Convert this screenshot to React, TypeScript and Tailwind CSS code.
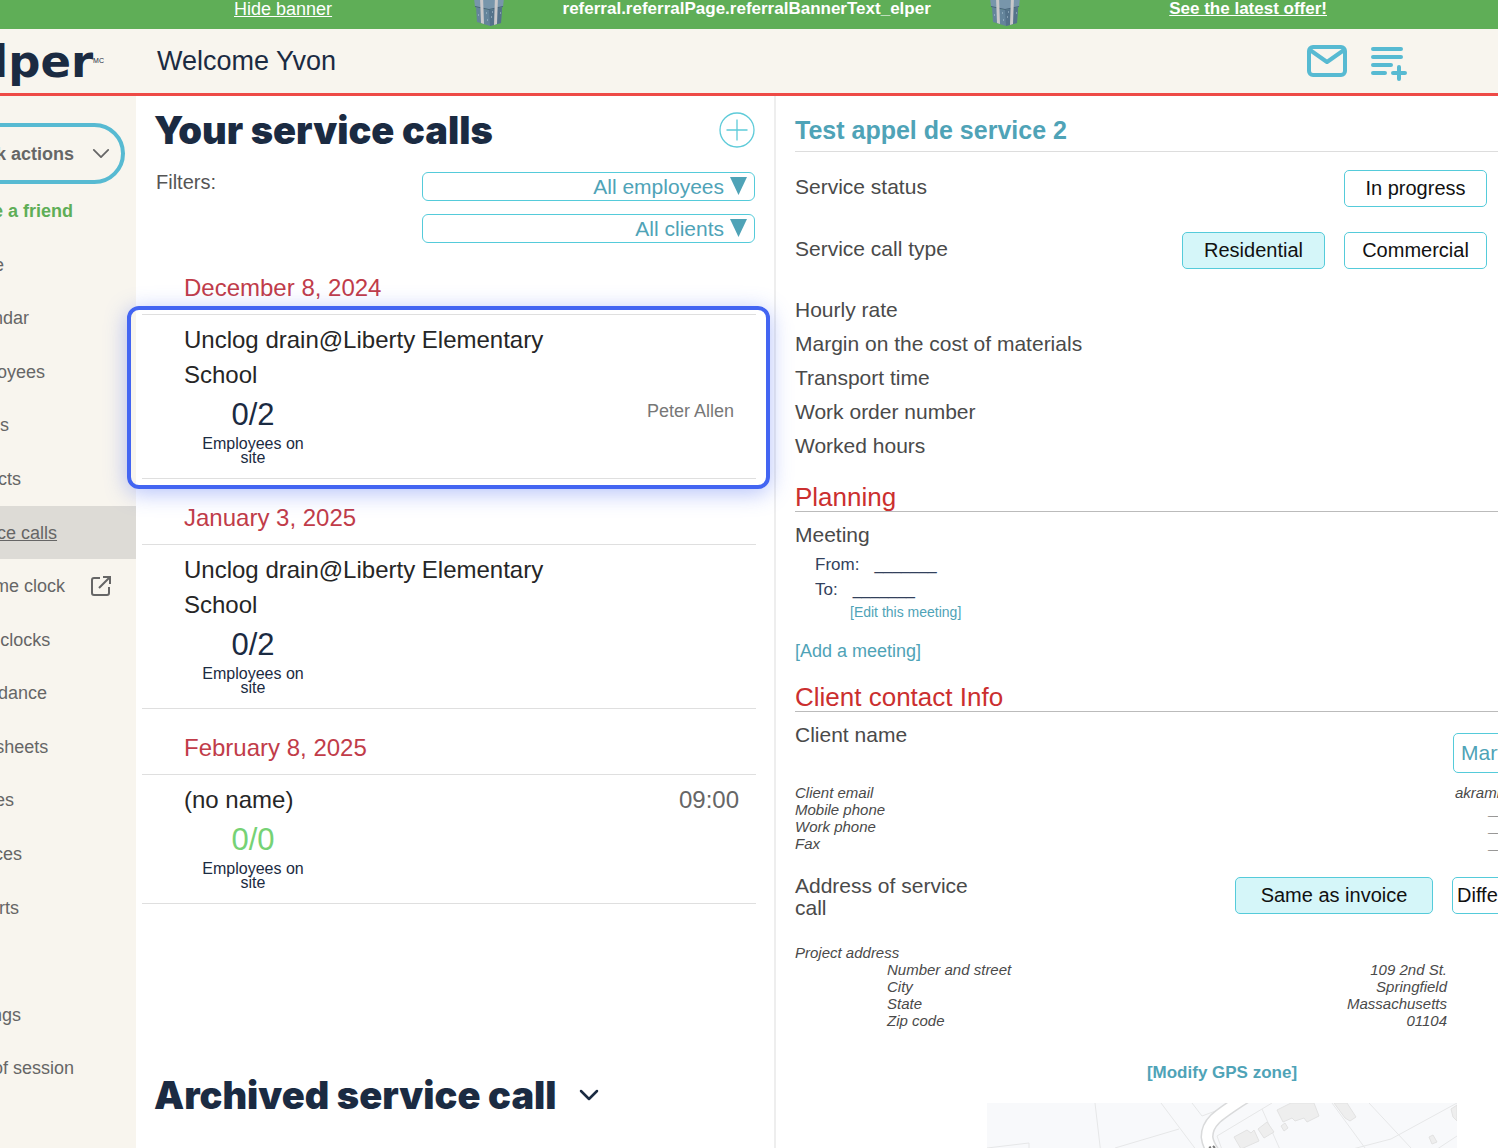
import { ReactNode } from "react";
import cn from "clsx";

type ServiceCall = {
  date: string;
  name: string;
  time?: string;
  onSite: string;
  complete?: boolean;
  employee?: string;
  selected?: boolean;
};

const serviceCalls: ServiceCall[] = [
  {
    date: "December 8, 2024",
    name: "Unclog drain@Liberty Elementary School",
    onSite: "0/2",
    employee: "Peter Allen",
    selected: true,
  },
  {
    date: "January 3, 2025",
    name: "Unclog drain@Liberty Elementary School",
    onSite: "0/2",
  },
  {
    date: "February 8, 2025",
    name: "(no name)",
    time: "09:00",
    onSite: "0/0",
    complete: true,
  },
];

const menu = [
  "Home",
  "Calendar",
  "Employees",
  "Teams",
  "Projects",
  "Service calls",
  "My time clock",
  "Time clocks",
  "Attendance",
  "Timesheets",
  "Quotes",
  "Invoices",
  "Reports",
  "Tools",
  "Settings",
  "End of session",
];

const details = [
  "Hourly rate",
  "Margin on the cost of materials",
  "Transport time",
  "Work order number",
  "Worked hours",
];

const address = [
  ["Number and street", "109 2nd St."],
  ["City", "Springfield"],
  ["State", "Massachusetts"],
  ["Zip code", "01104"],
];

function Gift() {
  return (
    <svg viewBox="0 0 32 34" className="mb-[2px] h-[34px] w-8 shrink-0" aria-hidden="true">
      <path d="M3 14 16 17 29 14 28 30 17 33 4 29Z" fill="#64849b" />
      <path d="M16 17 29 14 28 30 17 33Z" fill="#54728a" />
      <path d="M1 5 16 1 31 5 30 14 16 17 2 14Z" fill="#7896ab" />
      <path d="M2 13 16 16 30 13V14L16 17 2 14Z" fill="#47637a" />
      <path d="M7 4 10 3 11 31 8 30ZM22 3 25 4 24 31 21 32Z" fill="#c9c8ca" />
      <path d="M13 20h1M18 24h1M14 27h1M19 19h1M5 22h1M27 20h1" stroke="#b3cad9" />
    </svg>
  );
}

function Chevron(props: { className: string }) {
  return (
    <svg viewBox="0 0 20 12" className={props.className} fill="none" stroke="currentColor" strokeLinecap="round" strokeLinejoin="round" aria-hidden="true">
      <path d="M2 2 10 10 18 2" />
    </svg>
  );
}

function Banner() {
  return (
    <div className="flex h-[29px] shrink-0 items-end justify-between overflow-hidden bg-[#5fae57] pr-[171px] pl-[234px] text-lg leading-[22px] text-white">
      <a href="#hide" className="pb-[9px] underline">
        Hide banner
      </a>
      <div className="mr-2 flex items-end gap-[58px]">
        <Gift />
        <p className="pb-[9px] text-[17px] font-bold">
          referral.referralPage.referralBannerText_elper
        </p>
        <Gift />
      </div>
      <a href="#offer" className="pb-[9px] text-[17px] font-bold underline">
        See the latest offer!
      </a>
    </div>
  );
}

function Header() {
  return (
    <header className="flex h-[67px] shrink-0 items-center border-b-[3px] border-[#ee4a46] bg-[#f8f5ee] text-[#1b2b42]">
      <a href="#home" className="flex w-[157px] shrink-0 justify-end pt-[2px] pr-[53px]">
        <span className="font-['DejaVu_Sans'] text-[45px] leading-[52px] font-bold">elper</span>
        <span className="pt-5 text-[7px]">MC</span>
      </a>
      <h2 className="flex-1 text-[27px]">Welcome Yvon</h2>
      <div className="flex items-center gap-6 pr-[91px] text-[#57bad2]">
        <button aria-label="Messages">
          <svg viewBox="0 0 40 32" className="h-8 w-10" fill="none" stroke="currentColor" strokeWidth="4" strokeLinejoin="round">
            <rect x="2" y="2" width="36" height="28" rx="4" />
            <path d="M3 5 20 17 37 5" />
          </svg>
        </button>
        <button aria-label="Add note">
          <svg viewBox="0 0 36 36" className="mt-1 h-9 w-9" fill="none" stroke="currentColor" strokeWidth="4" strokeLinecap="round">
            <path d="M2 4H30M2 12H30M2 20H20M2 28H14M22 28H34M28 22V34" />
          </svg>
        </button>
      </div>
    </header>
  );
}

function Sidebar() {
  return (
    <nav className="flex w-[136px] shrink-0 flex-col overflow-hidden bg-[#f8f5ee] pt-[27px] pb-[53px] text-lg text-[#666]">
      <button className="mr-[11px] -ml-[72px] flex h-[61px] shrink-0 items-center justify-end gap-[18px] rounded-full border-4 border-[#57bad2] pr-[11px] font-bold whitespace-nowrap">
        Quick actions
        <Chevron className="h-[11px] w-[18px] stroke-2" />
      </button>
      <a href="#invite" className="-ml-[44px] flex h-[54px] shrink-0 items-center font-bold whitespace-nowrap text-[#5fae57]">
        Invite a friend
      </a>
      <ul className="flex flex-1 flex-col">
        {menu.map((label) => (
          <li
            key={label}
            className={cn("flex flex-1 items-center whitespace-nowrap", {
              "bg-[#dddbd6] underline": label === "Service calls",
            })}
          >
            <a href="#menu" className="-ml-[44px] flex items-center gap-[25px]">
              {label}
              {label === "My time clock" && (
                <svg viewBox="0 0 22 22" className="h-[22px] w-[22px]" fill="none" stroke="currentColor" strokeWidth="2">
                  <path d="M10 3H4a2 2 0 0 0-2 2V18a2 2 0 0 0 2 2H17a2 2 0 0 0 2-2V12M13 2H20V9M20 2 9 13" />
                </svg>
              )}
            </a>
          </li>
        ))}
      </ul>
    </nav>
  );
}

function Filter(props: { label: string; value: string }) {
  return (
    <div className="relative">
      <select
        aria-label={props.label}
        className="block h-[29px] w-full appearance-none rounded-md border border-[#55cbda] bg-white pr-[30px] text-right text-[21px] leading-[27px] text-[#4fa3b7] [text-align-last:right]"
      >
        <option>{props.value}</option>
      </select>
      <svg viewBox="0 0 17 18" className="pointer-events-none absolute top-[5px] right-2 h-[18px] w-[17px]" fill="#4fa3b7" aria-hidden="true">
        <path d="M0 0H17L8.5 18Z" />
      </svg>
    </div>
  );
}

function Call(props: { call: ServiceCall }) {
  const { call } = props;
  return (
    <section>
      <h3 className="flex h-[65px] items-end pb-[9px] pl-[42px] text-2xl leading-[35px] text-[#c13c49]">
        {call.date}
      </h3>
      <article className="relative border-y border-[#dfdfdf] pt-[7px] pr-[22px] pb-[13px] pl-[42px]">
        <div className="flex items-start justify-between">
          <h4 className="w-[380px] text-2xl leading-[35px] text-[#262626]">{call.name}</h4>
          <time className="-mr-[5px] text-2xl leading-[35px] text-[#666]">{call.time}</time>
        </div>
        <div className="flex items-start justify-between">
          <div className="w-[138px] px-3 text-center text-[#1b2b42]">
            <p className={cn("text-[31px] leading-[45px]", { "text-[#76d275]": call.complete })}>
              {call.onSite}
            </p>
            <p className="text-base leading-[14px]">Employees on site</p>
          </div>
          <p className="text-lg leading-[38px] text-[#777]">{call.employee}</p>
        </div>
        {call.selected && (
          <div className="pointer-events-none absolute -top-[9px] -right-[14px] -bottom-[11px] -left-[15px] rounded-xl border-4 border-[#4365f2] shadow-[0_4px_22px_rgba(67,101,242,0.4)]" />
        )}
      </article>
    </section>
  );
}

function CallList() {
  return (
    <main className="relative z-10 flex w-[640px] shrink-0 flex-col border-r-2 border-[#eee]">
      <div className="flex h-[68px] items-center justify-between pr-[19px] pl-[18px]">
        <h1 className="font-['Inter'] text-[38px] font-black text-[#1b2b42]">
          Your service calls
        </h1>
        <button aria-label="Add a service call" className="text-[#5ecbd9]">
          <svg viewBox="0 0 36 36" className="h-9 w-9" fill="none" stroke="currentColor" strokeWidth="1.3">
            <circle cx="18" cy="18" r="17" />
            <path d="M7.5 18H28.5M18 7.5V28.5" />
          </svg>
        </button>
      </div>
      <div className="mt-2 flex justify-between pr-[19px] pl-5">
        <span className="text-xl leading-5 text-[#555]">Filters:</span>
        <div className="flex w-[333px] flex-col gap-[13px]">
          <Filter label="Employee filter" value="All employees" />
          <Filter label="Client filter" value="All clients" />
        </div>
      </div>
      <div className="mt-[6px] mr-[18px] ml-[6px]">
        {serviceCalls.map((call) => (
          <Call key={call.date} call={call} />
        ))}
      </div>
      <button className="mt-auto flex items-center gap-[22px] pb-7 pl-[18px] text-[#1b2b42]">
        <span className="font-['Inter'] text-[38px] leading-[50px] font-black">
          Archived service call
        </span>
        <Chevron className="h-3 w-5 stroke-[2.5]" />
      </button>
    </main>
  );
}

function Choice(props: { children: ReactNode; active?: boolean; className: string }) {
  return (
    <button
      aria-pressed={props.active}
      className={cn(
        "h-[37px] shrink-0 rounded-[5px] border border-[#55cbda] pb-px text-xl whitespace-nowrap text-[#111]",
        props.active ? "bg-[#d5f6f9]" : "bg-white",
        props.className
      )}
    >
      {props.children}
    </button>
  );
}

function SectionTitle(props: { children: ReactNode }) {
  return (
    <h3 className="border-b border-[#bbb] text-[26px] leading-7 text-[#cb2f2f]">
      {props.children}
    </h3>
  );
}

function ParcelMap() {
  return (
    <svg viewBox="0 0 470 60" className="mx-auto h-[60px] w-[470px] bg-[#f8f9fb]" fill="none" stroke="#e6e7e8" aria-label="GPS zone map">
      <path d="M0 45 42 40V60M108 0 115 60M128 45 192 26M174 0 219 60M205 0 215 13 250 0M240 60 230 33 275 6 299 60M285 0 275 6M345 0 389 60M382 0 438 60M312 60 404 36 470 0M429 60 470 33" />
      <path d="M262 -8C232 12 220 18 220 34C221 43 226 50 236 60" stroke="#d9dadb" strokeWidth="13" />
      <path d="M262 -8C232 12 220 18 220 34C221 43 226 50 236 60" stroke="#fff" strokeWidth="10" />
      <g fill="#eeeeee" stroke="#e2e2e2">
        <path d="M247 34 260 27 264 30 267 27 272 38 254 46Z" />
        <path d="M271 26 280 19 287 29 277 35Z" />
        <path d="M290 7 304 0H327L332 13 320 19 317 15 308 18 305 15 296 19Z" />
        <path d="M294 23 298 20 301 25 297 28Z" />
        <path d="M347 0H360L369 14 363 18 358 15Z" />
        <path d="M442 34 446 32 450 39 445 41Z" />
        <path d="M470 2 464 6 466 14 470 18Z" />
      </g>
      <path d="M222 45 224 44M226 43 228 45" stroke="#777" strokeWidth="2" />
    </svg>
  );
}

function CallDetails() {
  return (
    <aside className="min-w-0 flex-1 overflow-hidden pl-[19px] text-[#4a4a4a]">
      <div className="-mr-[151px] text-[21px]">
        <h2 className="border-b border-[#ddd] pt-4 pb-[3px] text-[25px] leading-9 font-bold text-[#4fa3b7]">
          Test appel de service 2
        </h2>

        <div className="flex justify-between pt-[18px] pr-[162px]">
          <span className="leading-[34px]">Service status</span>
          <Choice className="w-[143px]">In progress</Choice>
        </div>
        <div className="flex justify-between pt-[25px] pr-[162px]">
          <span className="leading-[34px]">Service call type</span>
          <div className="flex gap-[19px]">
            <Choice active className="w-[143px]">
              Residential
            </Choice>
            <Choice className="w-[143px]">Commercial</Choice>
          </div>
        </div>

        <ul className="pt-6 pb-5 leading-[34px]">
          {details.map((detail) => (
            <li key={detail}>{detail}</li>
          ))}
        </ul>

        <SectionTitle>Planning</SectionTitle>
        <div className="pt-[11px]">
          <p className="leading-6">Meeting</p>
          <div className="pt-[5px] pl-5 text-[17px] leading-[25px] text-[#33415c]">
            <p className="flex gap-[15px]">
              From: <span className="text-base leading-[25px]">_______</span>
            </p>
            <p className="flex gap-[15px]">
              To: <span className="text-base leading-[25px]">_______</span>
            </p>
          </div>
          <button className="ml-[55px] block text-sm leading-5 text-[#4fa3b7]">
            [Edit this meeting]
          </button>
          <button className="mt-[17px] block text-lg leading-6 text-[#4fa3b7]">[Add a meeting]</button>
        </div>

        <div className="pt-5">
          <SectionTitle>Client contact Info</SectionTitle>
        </div>
        <div className="flex justify-between pt-[11px]">
          <span className="leading-6">Client name</span>
          <button className="mt-[10px] h-10 w-[196px] rounded-[5px] border border-[#55cbda] px-[7px] text-left text-[#4fa3b7]">
            Martin Bouchard
          </button>
        </div>
        <div className="flex justify-between pt-[11px] text-[15px] leading-[17px] italic">
          <ul>
            <li>Client email</li>
            <li>Mobile phone</li>
            <li>Work phone</li>
            <li>Fax</li>
          </ul>
          <ul className="w-[194px]">
            <li>akrambouchard@elper.com</li>
            <li className="pl-[34px]">_______</li>
            <li className="pl-[34px]">_______</li>
            <li className="pl-[34px]">_______</li>
          </ul>
        </div>

        <div className="flex justify-between pt-[23px]">
          <p className="w-48 leading-[22px]">Address of service call</p>
          <div className="flex gap-[19px] pt-[2px]">
            <Choice active className="w-[198px]">
              Same as invoice
            </Choice>
            <Choice className="w-[197px] px-1 text-left">Different from invoice</Choice>
          </div>
        </div>

        <div className="pt-[25px] pr-[202px] text-[15px] leading-[17px] italic">
          <p>Project address</p>
          <dl className="pl-[92px]">
            {address.map(([label, value]) => (
              <div key={label} className="flex justify-between">
                <dt>{label}</dt>
                <dd>{value}</dd>
              </div>
            ))}
          </dl>
        </div>

        <button className="mx-auto mt-8 mb-[18px] block text-[17px] leading-6 font-bold text-[#4fa3b7]">
          [Modify GPS zone]
        </button>
        <ParcelMap />
      </div>
    </aside>
  );
}

export default function App() {
  return (
    <div className="flex h-screen flex-col overflow-hidden bg-white font-['Liberation_Sans',sans-serif]">
      <Banner />
      <Header />
      <div className="flex min-h-0 flex-1">
        <Sidebar />
        <CallList />
        <CallDetails />
      </div>
    </div>
  );
}
